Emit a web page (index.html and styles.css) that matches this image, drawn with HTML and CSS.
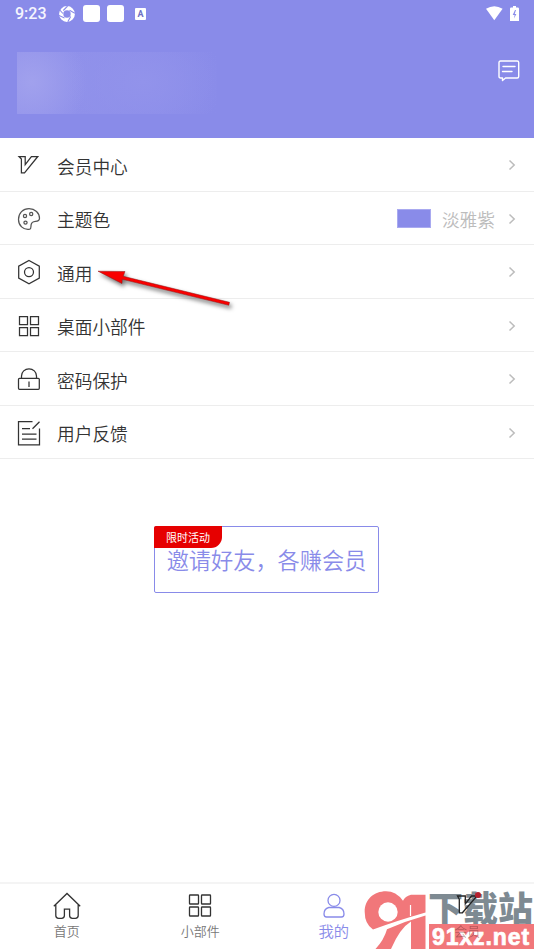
FILE: index.html
```html
<!DOCTYPE html>
<html lang="zh-CN">
<head>
<meta charset="utf-8">
<title>我的</title>
<link rel="stylesheet" href="styles.css">
</head>
<body>
<div class="app">
  <header class="header">
    <div class="status">
      <span class="clock">9:23</span>
      <svg class="aperture" width="16" height="16" viewBox="0 0 16 16"><circle cx="8" cy="8" r="5.8" fill="none" stroke="#fff" stroke-width="4.2"/><path d="M4.3 4.5 8.6 0M10.5 4.3l5.4 2.9M11.7 10.5l-2.9 5.3M5.5 11.9 0 9.4M3.9 7.5.8 4" stroke="#898be9" stroke-width="1.1"/></svg>
      <i class="app-dot"></i>
      <i class="app-dot second"></i>
      <span class="input-mark">A</span>
      <svg class="wifi" width="17" height="15" viewBox="0 0 17 15"><path d="M0 2.7Q8.3-2.3 16.6 2.7L8.3 14.2Z" fill="#fff"/></svg>
      <svg class="battery" width="9" height="16" viewBox="0 0 9 16"><path d="M3 0h3v1.6h1.8q1.2 0 1.2 1.2V15H0V2.8q0-1.2 1.2-1.2H3Z" fill="#fff"/><path d="M5 4 2.7 9h1.9L4 12.5 6.4 8H4.7L6 4Z" fill="#898be9"/></svg>
    </div>
    <div class="profile">
      <div class="user-blur"></div>
      <svg class="message" width="22" height="22" viewBox="0 0 22 22" fill="none" stroke="#fff" stroke-width="1.4" stroke-linejoin="round"><path d="M2.5 1h16.7q1.5 0 1.5 1.5v14q0 1.5-1.5 1.5H7.5L4.5 20.5V18H2.5Q1 18 1 16.5v-14Q1 1 2.5 1Z"/><path d="M5 6.5h12M4.5 11.5H14" stroke-width="1.4" stroke-linecap="round"/></svg>
    </div>
  </header>

  <main class="menu">
    <a class="row"><svg class="icon" viewBox="0 0 24 26"><path d="M2 4.5h6.2v8.2l6.2-8.2h6.4L7.5 20.8H4.4V7Z"/></svg><span>会员中心</span><svg class="chevron" viewBox="0 0 8 12"><path d="m1.5 1.5 4.7 4.5-4.7 4.5"/></svg></a>
    <a class="row"><svg class="icon soft" viewBox="0 0 24 26"><path d="M12.8 23.2C6 24.4 1.5 19 1.5 13.4 1.5 7 6 2.7 12 2.7s10.5 4.2 10.5 9.6q0 3-4 3-4 .3-4.4 3.5c-.3 2.2.1 4-1.3 4.4Z"/><circle cx="8" cy="10" r="1.6"/><circle cx="14.2" cy="8" r="1.6"/><circle cx="8.5" cy="16.6" r="1.6"/></svg><span>主题色</span><i class="swatch"></i><em class="value">淡雅紫</em><svg class="chevron" viewBox="0 0 8 12"><path d="m1.5 1.5 4.7 4.5-4.7 4.5"/></svg></a>
    <a class="row"><svg class="icon" viewBox="0 0 24 26"><path d="m12 1.5 10.3 5.6v12L12 24.7 1.7 19.1v-12Z"/><circle cx="12" cy="13.1" r="4.5"/></svg><span>通用</span><svg class="chevron" viewBox="0 0 8 12"><path d="m1.5 1.5 4.7 4.5-4.7 4.5"/></svg></a>
    <a class="row"><svg class="icon" viewBox="0 0 24 26"><path d="M2.5 3.5h8v8h-8zM13.5 3.5h8v8h-8zM2.5 14.5h8v8h-8zM13.5 14.5h8v8h-8z"/></svg><span>桌面小部件</span><svg class="chevron" viewBox="0 0 8 12"><path d="m1.5 1.5 4.7 4.5-4.7 4.5"/></svg></a>
    <a class="row"><svg class="icon" viewBox="0 0 24 26"><rect x="1.5" y="12.3" width="20.8" height="11" rx="1"/><path d="M4.5 12.2V10a7.5 7.2 0 0 1 15 0v2.2M12 15.5V21"/></svg><span>密码保护</span><svg class="chevron" viewBox="0 0 8 12"><path d="m1.5 1.5 4.7 4.5-4.7 4.5"/></svg></a>
    <a class="row"><svg class="icon" viewBox="0 0 24 26"><path d="M15.5 1.6h-14v23.2h21V8.5M22.5 1.8l-7 7M5 8.7h8M5 14.2h14.5M5 19.2h14.5"/></svg><span>用户反馈</span><svg class="chevron" viewBox="0 0 8 12"><path d="m1.5 1.5 4.7 4.5-4.7 4.5"/></svg></a>
    <svg class="pointer" width="150" height="60" viewBox="0 0 150 60"><path d="M8 16.2 35 16.5 33.2 21.3 139.5 47.3 138.8 50.3 32.2 24.3 32 28.5Z" fill="#f80000" stroke="#8c1616" stroke-width=".5"/></svg>
  </main>

  <section class="promo"><b class="tag">限时活动</b><span>邀请好友，各赚会员</span></section>

  <nav class="tabs">
    <a class="tab"><svg viewBox="0 0 28 28"><path d="M.8 14.2 14 1.5l13.2 12.7M2.8 12.7v10.8q0 2.8 2.8 2.8h3q2.8 0 2.8-2.8v-6.4h5.2v6.4q0 2.8 2.8 2.8h3q2.8 0 2.8-2.8V12.7"/></svg><span>首页</span></a>
    <a class="tab"><svg viewBox="0 0 28 28"><rect x="3.5" y="3" width="9" height="9" rx=".6"/><rect x="15.5" y="3" width="9" height="9" rx=".6"/><rect x="3.5" y="15" width="9" height="9" rx=".6"/><rect x="15.5" y="15" width="9" height="9" rx=".6"/></svg><span>小部件</span></a>
    <a class="tab active"><svg viewBox="0 0 28 28"><circle cx="14" cy="8.4" r="6"/><path d="M8.8 15.5h10.4q4.8 1.2 4.8 6.5 0 3-2.5 3h-15Q4 25 4 22q0-5.3 4.8-6.5Z"/></svg><span>我的</span></a>
    <a class="tab member"><svg viewBox="0 0 28 28"><path d="M4.5 4h7.8v7.8L18.5 4H24L9.4 20.8H6.3V7.3Z"/></svg><span>会员</span></a>
  </nav>

  <div class="watermark">
    <svg class="mark" width="64" height="60" viewBox="0 0 64 60"><path d="M.7 22C.7 9 10 1.5 22 1.3q10 0 17 9.4 2-4.5 8-6H61.5V22.5Q32 31 9 39.5.7 34 .7 22Z"/><path d="M23 39.3Q42 31 61.5 25.6V59H47V31.5Q36 38 27 59H11.5Q20 50 23 39.3Z"/><path d="M46.5 15v11" fill="none" stroke="#fff" stroke-width="1.2"/><circle cx="24" cy="22" r="9.7" fill="#fff"/></svg>
    <div class="brand"><span class="site">下载站</span><span class="domain">91xz.net</span></div>
    <i class="badge"></i>
  </div>
</div>
</body>
</html>
```
FILE: styles.css
```css
* { box-sizing: border-box; }
body { margin: 0; background: #fff; font-family: "Noto Sans CJK SC", sans-serif; color: #333; }
.app { position: relative; display: flex; flex-direction: column; width: 534px; height: 950px; overflow: hidden; }
.header { height: 138px; background: #898be9; flex: none; }
.status { display: flex; align-items: center; height: 27px; padding: 0 15px 0 15px; }
.clock { width: 44px; font: 500 16px/27px Roboto, sans-serif; color: #f5f5fe; }
.app-dot { width: 17px; height: 17px; margin-left: 8px; border-radius: 3px; background: #fff; }
.app-dot.second { margin-left: 7px; }
.input-mark { width: 11px; height: 12px; margin-left: 11px; border-radius: 1px; background: #fff; color: #6e70c4; font: 700 9px/12px Roboto, sans-serif; text-align: center; }
.wifi { margin-left: auto; }
.battery { margin-left: 7px; }
.profile { display: flex; justify-content: space-between; padding: 25px 14px 0 17px; }
.user-blur { width: 200px; height: 62px; background: radial-gradient(ellipse 55px 56px at 15px 30px, #a1a1ed, transparent), radial-gradient(ellipse 82px 56px at 126px 30px, #9293eb, transparent), linear-gradient(90deg, #9293eb, #898be9); }
.message { margin-top: 8px; }
.menu { position: relative; flex: none; padding-top: .4px; }
.row { display: flex; align-items: center; height: 53.5px; padding: 1px 18px 0 17px; border-bottom: 1px solid #ededed; font-size: 17.7px; font-weight: 350; line-height: 26px; }
.row span { margin: 1px auto 0 16px; }
.icon { width: 24px; height: 26px; fill: none; stroke: #333; stroke-width: 1.25; }
.icon.soft { stroke: #555; }
.chevron { width: 8px; height: 12px; fill: none; stroke: #bcbcbc; stroke-width: 1.5; }
.swatch { width: 34px; height: 19px; margin-right: 11px; background: #898be9; border: 1px solid #a9aaf0; }
.value { margin: 1px 13px 0 0; font-style: normal; color: #bcbcbc; }
.pointer { position: absolute; left: 90px; top: 117px; filter: drop-shadow(2px 3px 2px rgba(0,0,0,.55)); }
.promo { position: relative; width: 225px; height: 67px; margin: 66.6px 0 0 154px; border: 1.5px solid #898be9; border-radius: 2px; color: #898be9; font-size: 22.2px; font-weight: 350; line-height: 65px; text-align: center; white-space: nowrap; }
.tag { position: absolute; left: -1px; top: -1px; width: 68px; height: 22px; border-radius: 2px 0 11px 0; background: #e60000; color: #fff; font-size: 11px; font-weight: 400; line-height: 23px; }
.tabs { display: flex; height: 68px; margin-top: auto; border-top: 2px solid #f4f4f4; }
.tab { display: flex; flex: 1; flex-direction: column; align-items: center; padding-top: 7px; color: #777; font-size: 13px; font-weight: 350; line-height: 20px; }
.tab svg { width: 28px; height: 28px; margin-top: 1px; fill: none; stroke: #333; stroke-width: 1.3; }
.tab span { margin-top: 1px; }
.tab.active { color: #898be9; font-size: 15.3px; }
.tab.active span { margin-top: 0; }
.tab.active svg { stroke: #898be9; }
.tab.member svg { position: relative; z-index: 2; stroke: #222; }
.tab.member span { position: relative; z-index: 2; color: #5b2a2c; opacity: .4; }
.watermark { position: absolute; left: 364px; top: 890px; display: flex; width: 170px; height: 60px; }
.mark { fill: #f1777a; flex: none; }
.brand { display: flex; flex-direction: column; width: 105px; margin-left: 1px; }
.site { height: 34px; margin-left: -1px; color: #7e8a92; font-size: 35px; font-weight: 900; line-height: 33px; white-space: nowrap; }
.domain { height: 25px; padding-left: 3px; background: #f1777a; color: #fff; font: 900 23px/26px "Liberation Sans", sans-serif; letter-spacing: .9px; -webkit-text-stroke: .7px #fff; }
.badge { position: absolute; z-index: 3; left: 111px; top: 2px; width: 6px; height: 6px; border-radius: 50%; background: #b5202d; }
```
